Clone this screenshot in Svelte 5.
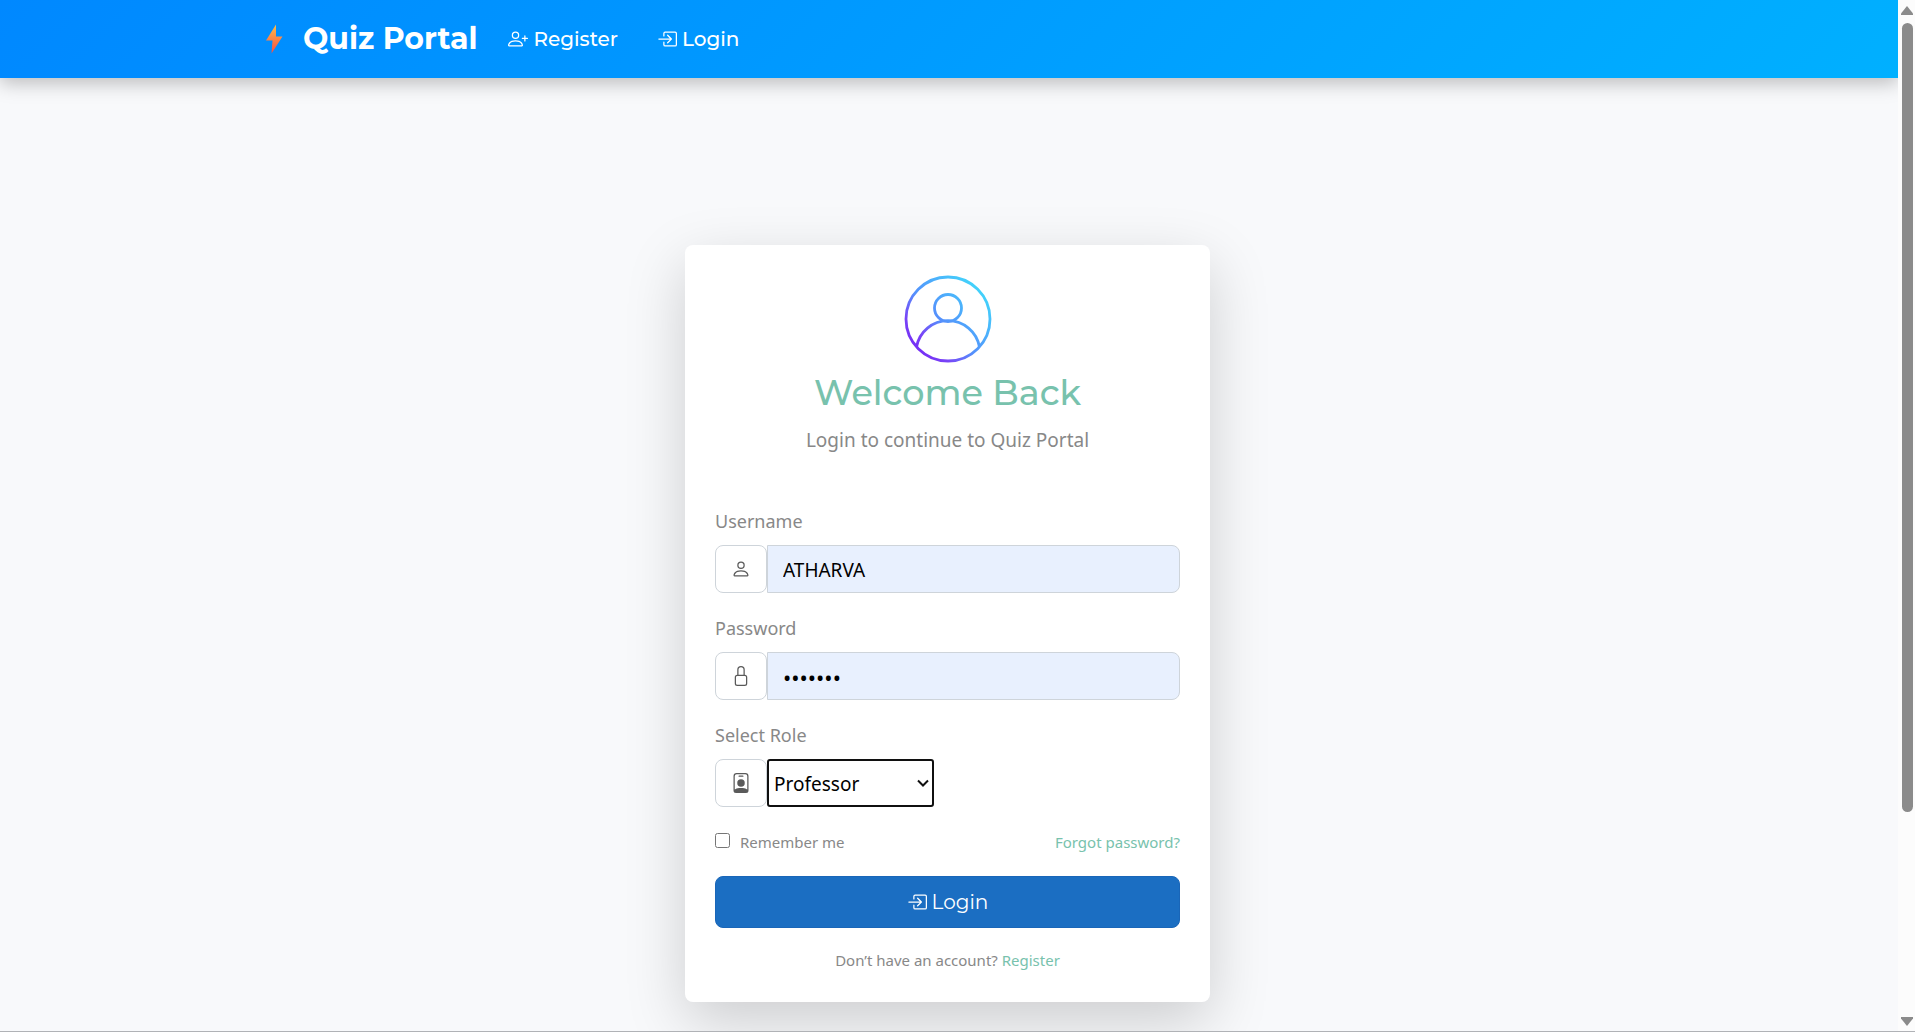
<script>
  let username = $state('ATHARVA');
  let password = $state('quizzes');
  let role = $state('Professor');
  let remember = $state(false);
  const roles = ['Student', 'Professor', 'Administrator'];

  const icons = {
    register: [
      'M6 8a3 3 0 1 0 0-6 3 3 0 0 0 0 6m2-3a2 2 0 1 1-4 0 2 2 0 0 1 4 0m4 8c0 1-1 1-1 1H1s-1 0-1-1 1-4 6-4 6 3 6 4m-1-.004c-.001-.246-.154-.986-.832-1.664C9.516 10.68 8.289 10 6 10s-3.516.68-4.168 1.332c-.678.678-.83 1.418-.832 1.664z',
      'M13.5 5a.5.5 0 0 1 .5.5V7h1.5a.5.5 0 0 1 0 1H14v1.5a.5.5 0 0 1-1 0V8h-1.5a.5.5 0 0 1 0-1H13V5.5a.5.5 0 0 1 .5-.5'
    ],
    login: [
      'M6 3.5a.5.5 0 0 1 .5-.5h8a.5.5 0 0 1 .5.5v9a.5.5 0 0 1-.5.5h-8a.5.5 0 0 1-.5-.5v-2a.5.5 0 0 0-1 0v2A1.5 1.5 0 0 0 6.5 14h8a1.5 1.5 0 0 0 1.5-1.5v-9A1.5 1.5 0 0 0 14.5 2h-8A1.5 1.5 0 0 0 5 3.5v2a.5.5 0 0 0 1 0z',
      'M11.854 8.354a.5.5 0 0 0 0-.708l-3-3a.5.5 0 1 0-.708.708L10.293 7.5H1.5a.5.5 0 0 0 0 1h8.793l-2.147 2.146a.5.5 0 0 0 .708.708z'
    ],
    person: [
      'M8 8a3 3 0 1 0 0-6 3 3 0 0 0 0 6m2-3a2 2 0 1 1-4 0 2 2 0 0 1 4 0m4 8c0 1-1 1-1 1H3s-1 0-1-1 1-4 6-4 6 3 6 4m-1-.004c-.001-.246-.154-.986-.832-1.664C11.516 10.68 10.289 10 8 10s-3.516.68-4.168 1.332c-.678.678-.83 1.418-.832 1.664z'
    ],
    lock: [
      'M8 1a2 2 0 0 1 2 2v4H6V3a2 2 0 0 1 2-2m3 6V3a3 3 0 0 0-6 0v4a2 2 0 0 0-2 2v5a2 2 0 0 0 2 2h6a2 2 0 0 0 2-2V9a2 2 0 0 0-2-2M5 8h6a1 1 0 0 1 1 1v5a1 1 0 0 1-1 1H5a1 1 0 0 1-1-1V9a1 1 0 0 1 1-1'
    ],
    badge: [
      'M6.5 2a.5.5 0 0 0 0 1h3a.5.5 0 0 0 0-1zM11 8a3 3 0 1 1-6 0 3 3 0 0 1 6 0',
      'M4.5 0A2.5 2.5 0 0 0 2 2.5V14a2 2 0 0 0 2 2h8a2 2 0 0 0 2-2V2.5A2.5 2.5 0 0 0 11.5 0zM3 2.5A1.5 1.5 0 0 1 4.5 1h7A1.5 1.5 0 0 1 13 2.5v10.795a4.2 4.2 0 0 0-.776-.492C11.392 12.387 10.063 12 8 12s-3.392.387-4.224.803a4.2 4.2 0 0 0-.776.492z'
    ]
  };
</script>

{#snippet icon(name)}
  <svg class="icon" viewBox="0 0 16 16" aria-hidden="true">
    {#each icons[name] as d}
      <path {d} />
    {/each}
  </svg>
{/snippet}

<div class="window">
  <div class="page">
    <header>
      <nav>
        <a class="brand" href="#home">
          <svg class="bolt" viewBox="0 0 18 30" aria-hidden="true">
            <defs>
              <linearGradient id="bolt-fill" x1="0" y1="0" x2="0" y2="1">
                <stop offset="0" stop-color="#ffc048" />
                <stop offset="1" stop-color="#f74a45" />
              </linearGradient>
            </defs>
            <path fill="url(#bolt-fill)" d="M11 .5 1 16.5h6.500L6.500 29.500 17.500 12.500h-6.500z" />
          </svg>
          Quiz Portal
        </a>
        <a class="link" href="#register">{@render icon('register')}Register</a>
        <a class="link" href="#login">{@render icon('login')}Login</a>
      </nav>
    </header>

    <main>
      <section class="card">
        <svg class="avatar" viewBox="0 0 90 90" aria-hidden="true">
          <defs>
            <linearGradient id="ring" gradientUnits="userSpaceOnUse" x1="14" y1="74" x2="76" y2="14">
              <stop offset="0" stop-color="#7630f5" />
              <stop offset=".15" stop-color="#7845f7" />
              <stop offset=".42" stop-color="#5590fc" />
              <stop offset="1" stop-color="#42d3fb" />
            </linearGradient>
          </defs>
          <g fill="none" stroke="url(#ring)" stroke-width="2.800">
            <circle cx="45" cy="45" r="42" />
            <circle cx="45" cy="34" r="13.500" />
            <path d="M13.500 73a32 32 0 0 1 63 0" />
          </g>
        </svg>
        <h1>Welcome Back</h1>
        <p class="lead">Login to continue to Quiz Portal</p>

        <form onsubmit={(e) => e.preventDefault()}>
          <div class="field">
            <label for="username">Username</label>
            <div class="group">
              <span class="addon">{@render icon('person')}</span>
              <input class="text" id="username" type="text" bind:value={username} />
            </div>
          </div>
          <div class="field">
            <label for="password">Password</label>
            <div class="group">
              <span class="addon">{@render icon('lock')}</span>
              <input class="text secret" id="password" type="password" bind:value={password} />
            </div>
          </div>
          <div class="field">
            <label for="role">Select Role</label>
            <div class="group">
              <span class="addon">{@render icon('badge')}</span>
              <span class="picker">
                <select id="role" bind:value={role}>
                  {#each roles as name}
                    <option>{name}</option>
                  {/each}
                </select>
                <svg class="chevron" viewBox="0 0 12 8" aria-hidden="true"><path d="m1 1.500 5 5 5-5" /></svg>
              </span>
            </div>
          </div>

          <div class="options">
            <label class="remember" for="remember">
              <input id="remember" type="checkbox" bind:checked={remember} />
              Remember me
            </label>
            <a href="#forgot">Forgot password?</a>
          </div>

          <button type="submit">{@render icon('login')}Login</button>
        </form>

        <p class="signup">Don’t have an account? <a href="#register">Register</a></p>
      </section>
    </main>
  </div>

  <div class="scrollbar" aria-hidden="true">
    <svg viewBox="0 0 12 9"><path d="M6 0 12 7.500V9H0V7.500z" /></svg>
    <div class="track"><div class="thumb"></div></div>
    <svg viewBox="0 0 12 9"><path d="M0 0h12v1.500L6 9 0 1.500z" /></svg>
  </div>
</div>

<style>
  :global(body) {
    margin: 0;
    background: #f8f9fb;
  }

  .window {
    box-sizing: border-box;
    min-height: 100vh;
    display: grid;
    grid-template-columns: 1fr 17px;
    border-bottom: 1px solid #b0b2b6;
    color: #888;
    font-family: 'Segoe UI', 'Noto Sans', sans-serif;
    font-size: 19px;
    line-height: 30px;
  }

  .page {
    min-width: 0;
    display: flex;
    flex-direction: column;
    overflow: hidden;
  }

  header {
    background: linear-gradient(135deg, #0088ff, #00b0ff);
    box-shadow: 0 5px 18px rgba(0, 0, 0, 0.25);
  }

  nav {
    box-sizing: border-box;
    max-width: 1390px;
    height: 78px;
    margin: 0 auto;
    padding: 0 11px;
    display: flex;
    align-items: center;
  }

  nav a {
    color: #fff;
    font-family: Montserrat, Inter, sans-serif;
    text-decoration: none;
  }

  .brand {
    display: flex;
    align-items: center;
    gap: 20px;
    margin-right: 31px;
    font-size: 30px;
    font-weight: 700;
  }

  .bolt {
    width: 18px;
    height: 30px;
  }

  .link {
    display: flex;
    align-items: center;
    gap: 5px;
    margin-right: 39px;
    font-size: 20px;
    font-weight: 500;
  }

  .icon {
    width: 20px;
    height: 20px;
    flex: none;
    fill: currentColor;
  }

  main {
    flex: 1;
    padding: 167px 23px 29px 20px;
    display: flex;
    justify-content: center;
    align-items: flex-start;
  }

  .card {
    box-sizing: border-box;
    width: 100%;
    max-width: 525px;
    padding: 29px 30px 27px;
    display: flex;
    flex-direction: column;
    align-items: center;
    background: #fff;
    border-radius: 8px;
    box-shadow: 0 20px 60px rgba(0, 0, 0, 0.175);
  }

  .avatar {
    width: 90px;
    height: 90px;
  }

  h1 {
    margin: 7px 0 10px;
    color: #78c2ad;
    font-family: Montserrat, Inter, sans-serif;
    font-size: 35px;
    font-weight: 500;
    line-height: 44px;
  }

  p {
    margin: 0;
  }

  form {
    width: 100%;
    margin-top: 51px;
  }

  .field {
    margin-bottom: 20px;
  }

  .field label {
    display: block;
    margin-bottom: 9px;
    font-size: 18px;
  }

  .group {
    display: flex;
    height: 48px;
  }

  .addon {
    box-sizing: border-box;
    width: 52px;
    display: grid;
    place-items: center;
    border: 1px solid #ced4da;
    border-radius: 8px;
    color: #5a5a5a;
  }

  .text {
    box-sizing: border-box;
    flex: 1;
    min-width: 0;
    padding: 2px 15px 0;
    border: 1px solid #ced4da;
    border-radius: 0 8px 8px 0;
    background: #e8f0fe;
    color: #000;
    font: inherit;
  }

  .secret {
    font-size: 22px;
  }

  .picker {
    display: grid;
    align-items: center;
  }

  select {
    grid-area: 1 / 1;
    box-sizing: border-box;
    width: 167px;
    height: 100%;
    padding: 2px 24px 0 5px;
    appearance: none;
    border: 2px solid #101010;
    border-radius: 3px;
    background: #fff;
    color: #000;
    font: inherit;
  }

  .chevron {
    grid-area: 1 / 1;
    justify-self: end;
    width: 12px;
    height: 8px;
    margin-right: 5px;
    fill: none;
    stroke: #101010;
    stroke-width: 2;
    pointer-events: none;
  }

  .options {
    display: flex;
    align-items: center;
    justify-content: space-between;
    margin-bottom: 19px;
    font-size: 15px;
  }

  .remember {
    display: flex;
    align-items: center;
    gap: 10px;
  }

  .remember input {
    width: 15px;
    height: 15px;
    margin: 0 0 3px;
  }

  .card a {
    color: #78c2ad;
    text-decoration: none;
  }

  button {
    width: 100%;
    height: 52px;
    display: flex;
    align-items: center;
    justify-content: center;
    gap: 5px;
    border: 1px solid #1a66b8;
    border-radius: 8px;
    background: #1b6ec2;
    color: #fff;
    font-family: Montserrat, Inter, sans-serif;
    font-size: 20px;
  }

  .signup {
    margin-top: 17px;
    font-size: 15px;
  }

  .scrollbar {
    box-sizing: border-box;
    padding: 6px 0 5px 3px;
    display: flex;
    flex-direction: column;
    background: #fcfcfc;
    fill: #8b8b8b;
  }

  .scrollbar svg {
    width: 12px;
    height: 9px;
  }

  .track {
    flex: 1;
    padding: 8px 0;
  }

  .thumb {
    width: 11px;
    height: 80%;
    margin-left: 1px;
    border-radius: 6px;
    background: #8b8b8b;
  }
</style>
